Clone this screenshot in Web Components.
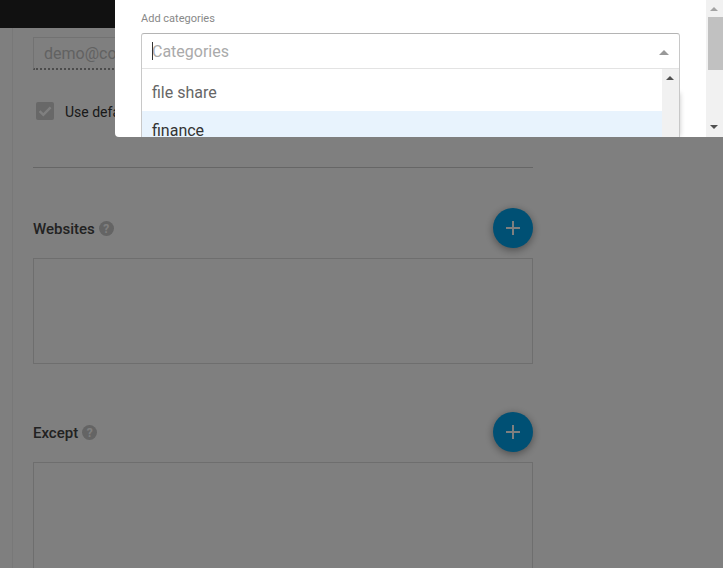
<!DOCTYPE html>
<html>
<head>
<meta charset="utf-8">
<title>Categories</title>
<style>
  html, body { margin: 0; height: 100%; overflow: hidden; background: #fff; }
  body { font-family: Roboto, "Liberation Sans", sans-serif; }
</style>
</head>
<body>
<app-shell>
  <email-field value="demo@com"></email-field>
  <check-row label="Use default"></check-row>
  <hr-line></hr-line>
  <rule-section title="Websites" box="106"></rule-section>
  <rule-section title="Except" box="200"></rule-section>
</app-shell>
<category-modal></category-modal>
<script>
class AppShell extends HTMLElement {
  connectedCallback() {
    this.attachShadow({ mode: "open" });
    this.shadowRoot.innerHTML = `
      <style>
        :host { display: block; height: 568px; overflow: hidden; position: relative; }
        .top { height: 28px; background: #222; }
        .body { display: flex; }
        .rail { width: 12px; flex: none; border-right: 1px solid #f0f0f0; }
        main { width: 500px; margin-left: 20px; display: flex; flex-direction: column; }
        .dim { position: absolute; inset: 0; background: rgba(0, 0, 0, 0.5); }
      </style>
      <div class="top"></div>
      <div class="body">
        <div class="rail"></div>
        <main><slot></slot></main>
      </div>
      <div class="dim"></div>
    `;
  }
}

class EmailField extends HTMLElement {
  connectedCallback() {
    this.attachShadow({ mode: "open" });
    this.shadowRoot.innerHTML = `
      <style>
        :host { display: block; margin-top: 9px; }
        .field {
          height: 33px;
          box-sizing: border-box;
          border: 1px solid #e4e4e4;
          border-bottom: 2px dotted #999;
          padding-left: 10px;
          font-size: 16px;
          line-height: 31px;
          color: #c4c4c4;
          white-space: nowrap;
        }
      </style>
      <div class="field">${this.getAttribute("value")}</div>
    `;
  }
}

class CheckRow extends HTMLElement {
  connectedCallback() {
    this.attachShadow({ mode: "open" });
    this.shadowRoot.innerHTML = `
      <style>
        :host { display: flex; align-items: center; gap: 11px; margin: 32px 0 0 3px; height: 18px; }
        .box { width: 18px; height: 18px; border-radius: 2px; background: #d0d0d0; flex: none; display: block; }
        span { font-size: 14px; line-height: 20px; padding-top: 1px; color: #333; white-space: nowrap; }
      </style>
      <svg class="box" viewBox="0 0 18 18"><path d="M3.6 9.2l3.7 3.7L14.6 5.4" fill="none" stroke="#fff" stroke-width="2.4"/></svg>
      <span>${this.getAttribute("label")}</span>
    `;
  }
}

class HrLine extends HTMLElement {
  connectedCallback() {
    this.attachShadow({ mode: "open" });
    this.shadowRoot.innerHTML = `
      <style>:host { display: block; margin-top: 47px; height: 1px; background: #ccc; }</style>
    `;
  }
}

class HelpIcon extends HTMLElement {
  connectedCallback() {
    this.attachShadow({ mode: "open" });
    this.shadowRoot.innerHTML = `
      <style>
        :host {
          display: inline-flex; align-items: center; justify-content: center;
          width: 15px; height: 15px; border-radius: 50%;
          background: #c8c8c8; color: #fff;
          font: 700 12px Roboto, sans-serif;
        }
      </style>?
    `;
  }
}

class FabButton extends HTMLElement {
  connectedCallback() {
    this.attachShadow({ mode: "open" });
    this.shadowRoot.innerHTML = `
      <style>
        :host {
          display: flex; align-items: center; justify-content: center;
          width: 40px; height: 40px; border-radius: 50%;
          background: #00a0e9;
          box-shadow: 0 2px 8px rgba(0, 0, 0, 0.4);
        }
        svg { display: block; }
      </style>
      <svg width="14" height="14" viewBox="0 0 14 14"><path d="M7 0v14M0 7h14" stroke="#fff" stroke-width="2" fill="none"/></svg>
    `;
  }
}

class RuleSection extends HTMLElement {
  connectedCallback() {
    const first = this.previousElementSibling.tagName === "HR-LINE";
    this.attachShadow({ mode: "open" });
    this.shadowRoot.innerHTML = `
      <style>
        :host { display: block; margin-top: ${first ? 40 : 48}px; }
        header { display: flex; align-items: center; height: 40px; }
        h3 { margin: 2px 4px 0 0; font-size: 15px; font-weight: 500; color: #444; }
        help-icon { margin-top: 1px; }
        fab-button { margin-left: auto; }
        .box { margin-top: 10px; height: ${this.getAttribute("box")}px; box-sizing: border-box; border: 1px solid #ddd; }
      </style>
      <header>
        <h3>${this.getAttribute("title")}</h3>
        <help-icon></help-icon>
        <fab-button></fab-button>
      </header>
      <div class="box"></div>
    `;
  }
}

class ScrollBar extends HTMLElement {
  connectedCallback() {
    const dark = this.hasAttribute("dark");
    this.attachShadow({ mode: "open" });
    this.shadowRoot.innerHTML = `
      <style>
        :host { display: block; width: 17px; background: #f1f1f1; position: relative; flex: none; }
        .up, .down { position: absolute; left: 4px; width: 0; height: 0; border-left: 4px solid transparent; border-right: 4px solid transparent; }
        .up { top: 7px; border-bottom: 4px solid ${dark ? "#505050" : "#a3a3a3"}; }
        .down { bottom: 8px; border-top: 4px solid #505050; }
        .thumb { position: absolute; left: 2px; right: 0; top: 17px; height: 53px; background: #c1c1c1; }
      </style>
      <div class="up"></div>
      ${dark ? "" : '<div class="thumb"></div><div class="down"></div>'}
    `;
  }
}

class CategoryModal extends HTMLElement {
  connectedCallback() {
    this.attachShadow({ mode: "open" });
    this.shadowRoot.innerHTML = `
      <style>
        :host {
          position: absolute; left: 115px; top: 0; width: 608px; height: 137px;
          display: flex; background: #fff; overflow: hidden;
          border-radius: 0 0 0 4px;
          color: #333;
        }
        .content { flex: 1; padding: 12px 26px 0; min-width: 0; position: relative; }
        label { display: block; font-size: 11px; line-height: 14px; color: #888; }
        .select { position: relative; margin-top: 7px; width: 539px; box-sizing: border-box; border: 1px solid #b8b8b8; border-color: #b4b4b4 #c8c8c8 #c8c8c8; border-radius: 3px 3px 0 0; z-index: 1; background: #fff; }
        .input { height: 34px; display: flex; align-items: center; padding-left: 10px; border-bottom: 1px solid #e3e3e3; font-size: 16px; color: #aaa; position: relative; }
        .caret { position: absolute; left: 10px; top: 8px; width: 1px; height: 18px; background: #333; }
        .arrow { position: absolute; right: 10px; top: 16px; width: 0; height: 0; border-left: 5px solid transparent; border-right: 5px solid transparent; border-bottom: 5px solid #999; }
        .list { display: flex; height: 120px; }
        ul { flex: 1; margin: 0; padding: 4px 0 0; list-style: none; font-size: 16px; }
        li { box-sizing: border-box; height: 38px; padding: 1px 0 0 10px; line-height: 38px; color: #666; }
        li.on { background: #e8f3fd; color: #333; }
        .behind { position: absolute; left: 400px; right: 26px; top: 92px; height: 43px; box-shadow: 0 1px 5px rgba(0, 0, 0, 0.22); }
      </style>
      <div class="content">
        <label>Add categories</label>
        <div class="behind"></div>
        <div class="select">
          <div class="input"><span class="caret"></span>Categories<span class="arrow"></span></div>
          <div class="list">
            <ul><li>file share</li><li class="on">finance</li></ul>
            <scroll-bar dark></scroll-bar>
          </div>
        </div>
      </div>
      <scroll-bar></scroll-bar>
    `;
  }
}

customElements.define("app-shell", AppShell);
customElements.define("email-field", EmailField);
customElements.define("check-row", CheckRow);
customElements.define("hr-line", HrLine);
customElements.define("help-icon", HelpIcon);
customElements.define("fab-button", FabButton);
customElements.define("rule-section", RuleSection);
customElements.define("scroll-bar", ScrollBar);
customElements.define("category-modal", CategoryModal);
</script>
</body>
</html>
